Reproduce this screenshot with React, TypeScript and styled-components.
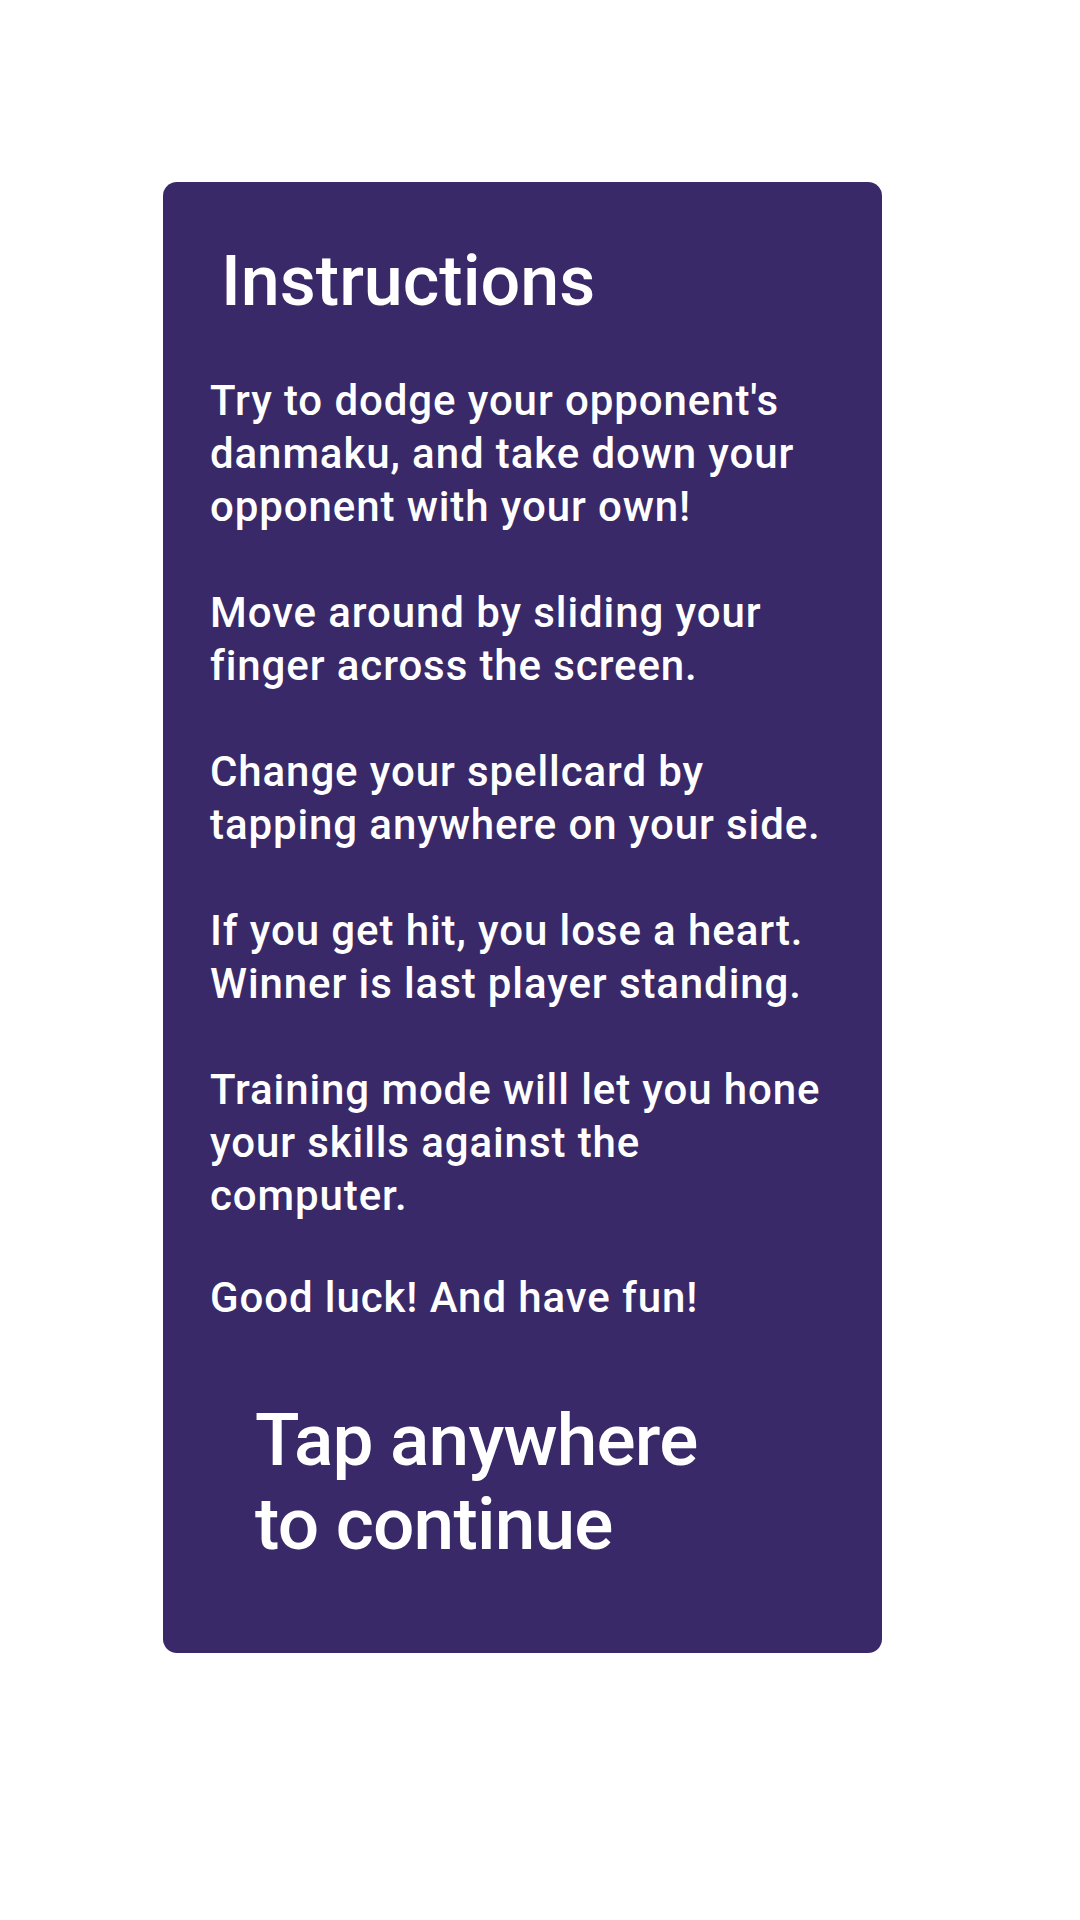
import React from "react";
import styled, { createGlobalStyle } from "styled-components";

const Global = createGlobalStyle`
  html, body { margin: 0; padding: 0; background: #ffffff; }
  body { font-family: Roboto, "Liberation Sans", sans-serif; }
`;

const Page = styled.main`
  width: 1080px;
  min-height: 1920px;
  box-sizing: border-box;
  padding: 182px 0 0 163px;
  display: flex;
  align-items: flex-start;
`;

const Card = styled.section`
  width: 719px;
  box-sizing: border-box;
  background: #392968;
  border-radius: 14px;
  color: #ffffff;
  display: flex;
  flex-direction: column;
  padding: 59px 0 87px 0;
`;

const Title = styled.h1`
  margin: 0 0 0 58px;
  font-size: 70px;
  line-height: 80px;
  font-weight: 500;
  white-space: nowrap;
`;

const Body = styled.div`
  margin: 53px 0 0 47px;
  display: flex;
  flex-direction: column;
  gap: 53px;
`;

const Para = styled.p<{ $pull?: number }>`
  margin: ${(p) => -(p.$pull ?? 0)}px 0 0 0;
  font-size: 42px;
  line-height: 53px;
  font-weight: 500;
  letter-spacing: 0.9px;
  white-space: nowrap;
`;

const Continue = styled.div`
  margin: 74px 0 0 92px;
  font-size: 73px;
  line-height: 84px;
  font-weight: 500;
  letter-spacing: -0.8px;
  white-space: nowrap;
`;

const paragraphs: string[][] = [
  ["Try to dodge your opponent's", "danmaku, and take down your", "opponent with your own!"],
  ["Move around by sliding your", "finger across the screen."],
  ["Change your spellcard by", "tapping anywhere on your side."],
  ["If you get hit, you lose a heart.", "Winner is last player standing."],
  ["Training mode will let you hone", "your skills against the", "computer."],
];

export default function App() {
  return (
    <>
      <Global />
      <Page>
        <Card>
          <Title>Instructions</Title>
          <Body>
            {paragraphs.map((lines, i) => (
              <Para key={i}>
                {lines.map((l, j) => (
                  <React.Fragment key={j}>
                    {j > 0 && <br />}
                    {l}
                  </React.Fragment>
                ))}
              </Para>
            ))}
            <Para $pull={4}>Good luck! And have fun!</Para>
          </Body>
          <Continue>
            Tap anywhere
            <br />
            to continue
          </Continue>
        </Card>
      </Page>
    </>
  );
}
